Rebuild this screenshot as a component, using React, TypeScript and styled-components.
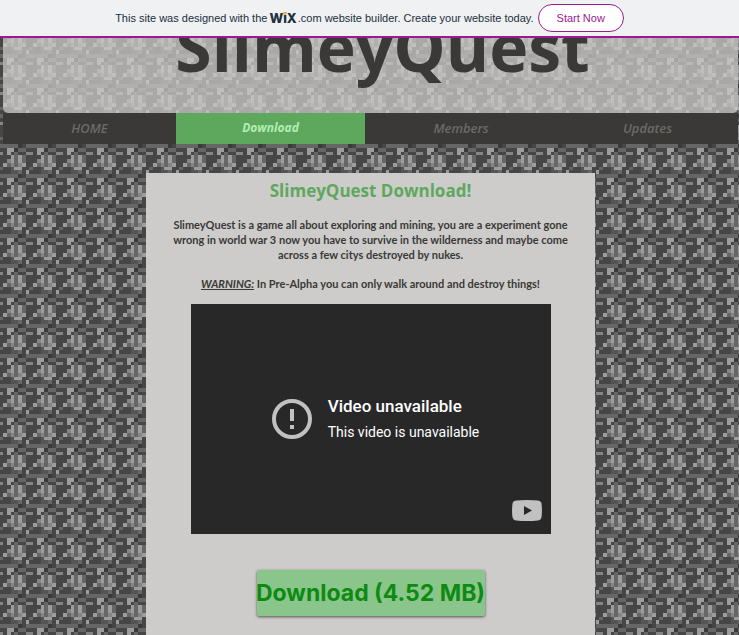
import React from "react";
import styled, { createGlobalStyle } from "styled-components";

/* Shades of the stone texture, one digit per texel, eight texels per row. */
const shades = ["#3a3a3a", "#464646", "#555555", "#666666", "#858585", "#9d9d9d"];
const texels = [
  "33330133",
  "15503311",
  "15131144",
  "11535311",
  "14535311",
  "53434511",
  "11255113",
  "11223151",
];

const stoneTile = (() => {
  const rects = texels
    .map((row, y) =>
      row
        .split("")
        .map((s, x) => `<rect x='${x}' y='${y}' width='1' height='1' fill='${shades[Number(s)]}'/>`)
        .join("")
    )
    .join("");
  const svg = `<svg xmlns='http://www.w3.org/2000/svg' width='30' height='30' viewBox='0 0 8 8' shape-rendering='crispEdges'>${rects}</svg>`;
  return `url("data:image/svg+xml,${encodeURIComponent(svg).replace(/'/g, "%27")}")`;
})();

const GlobalStyle = createGlobalStyle`
  * { box-sizing: border-box; }
  body {
    margin: 0;
    background: ${stoneTile} 3px 24px / 30px 30px #555;
    font-family: "Liberation Sans", Arial, sans-serif;
    color: #3a3937;
  }
`;

const Banner = styled.aside`
  display: flex;
  align-items: center;
  justify-content: center;
  gap: 4px;
  height: 38px;
  background: #eff1f3;
  border-bottom: 2px solid #9a1b8f;
  color: #20303c;
  font-size: 11px;
  white-space: nowrap;
`;

const BannerText = styled.p`
  margin: 0;
  display: flex;
  align-items: center;
  line-height: 16px;
`;

const WixMark = styled.span`
  position: relative;
  margin: 0 1px 0 2px;
  font: 800 13px/16px Inter, sans-serif;

  &::after {
    content: "";
    position: absolute;
    left: 14px;
    top: 2px;
    width: 3px;
    height: 3px;
    border-radius: 1px;
    background: #fbbd23;
  }
`;

const StartLink = styled.a`
  display: flex;
  align-items: center;
  height: 28px;
  padding: 0 18px;
  border: 1px solid #9a1b8f;
  border-radius: 14px;
  background: #fff;
  color: #9a1b8f;
  font-size: 11px;
  text-decoration: none;
`;

const Site = styled.div`
  margin: 0 1px 0 3px;
`;

const Header = styled.header`
  display: flex;
  align-items: flex-start;
  justify-content: center;
  height: 75px;
  overflow: hidden;
  border-radius: 0 0 5px 5px;
  background: rgba(205, 204, 202, 0.73);
`;

const SiteTitle = styled.h1`
  margin: -25px 0 0 24px;
  font: 700 66px/66px "Open Sans", sans-serif;
`;

const Nav = styled.nav`
  display: grid;
  grid-template-columns: 173fr 189fr 192fr 181fr;
  height: 31px;
  background: #3a3937;
`;

const NavLink = styled.a<{ $active?: boolean }>`
  display: flex;
  align-items: center;
  justify-content: center;
  padding-bottom: 2px;
  background: ${(p) => (p.$active ? "#5ea85e" : "transparent")};
  color: ${(p) => (p.$active ? "#b4ecb4" : "#6b6a68")};
  font: italic ${(p) => (p.$active ? "700 12px" : "600 13px")}/20px "Open Sans", sans-serif;
  text-decoration: none;
`;

const Panel = styled.main`
  display: flex;
  flex-direction: column;
  align-items: center;
  width: 100%;
  max-width: 449px;
  min-height: 462px;
  margin: 29px auto 0;
  padding: 4px 20px 20px;
  background: #cdccca;
  text-align: center;
`;

const PanelTitle = styled.h2`
  margin: 0;
  color: #5ea85e;
  font: 700 17px/28px "Open Sans", sans-serif;
`;

const Copy = styled.p`
  margin: 12px 0 0;
  font: 700 11px/15px Lato, sans-serif;

  & + & {
    margin-top: 14px;
  }
`;

const Warning = styled.em`
  text-decoration: underline;
`;

const Player = styled.section`
  position: relative;
  display: flex;
  align-items: center;
  justify-content: center;
  gap: 16px;
  width: 360px;
  max-width: 100%;
  height: 230px;
  margin-top: 13px;
  padding-left: 10px;
  background: #282828;
  color: #fff;
  font-family: Roboto, sans-serif;
  text-align: left;
`;

const PlayerHeading = styled.h3`
  margin: 0;
  font-size: 17px;
  font-weight: 500;
  line-height: 26px;
`;

const PlayerNote = styled.p`
  margin: 0;
  font-size: 14px;
  line-height: 26px;
`;

const PlayButton = styled.button`
  position: absolute;
  right: 9px;
  bottom: 13px;
  display: flex;
  padding: 0;
  border: 0;
  background: none;
`;

const DownloadLink = styled.a`
  display: flex;
  align-items: center;
  justify-content: center;
  width: 228px;
  height: 46px;
  margin-top: 36px;
  border-radius: 2px;
  background: #8ac68b;
  box-shadow: 0 1px 3px rgba(0, 0, 0, 0.6);
  color: #0e8a12;
  font: 700 23px/32px Inter, sans-serif;
  text-decoration: none;
  white-space: nowrap;
`;

const links = ["HOME", "Download", "Members", "Updates"];

export default function App() {
  return (
    <>
      <GlobalStyle />
      <Banner>
        <BannerText>
          <span>This site was designed with the</span>
          <WixMark>WiX</WixMark>
          <span>.com website builder. Create your website today.</span>
        </BannerText>
        <StartLink href="#start">Start Now</StartLink>
      </Banner>
      <Site>
        <Header>
          <SiteTitle>SlimeyQuest</SiteTitle>
        </Header>
        <Nav>
          {links.map((label) => (
            <NavLink key={label} href={`#${label.toLowerCase()}`} $active={label === "Download"}>
              {label}
            </NavLink>
          ))}
        </Nav>
        <Panel>
          <PanelTitle>SlimeyQuest Download!</PanelTitle>
          <Copy>
            SlimeyQuest is a game all about exploring and mining, you are a experiment gone
            <br />
            wrong in world war 3 now you have to survive in the wilderness and maybe come
            <br />
            across a few citys destroyed by nukes.
          </Copy>
          <Copy>
            <Warning>WARNING:</Warning> In Pre-Alpha you can only walk around and destroy things!
          </Copy>
          <Player>
            <svg width="40" height="40" viewBox="0 0 40 40" aria-hidden="true">
              <circle cx="20" cy="20" r="18" fill="none" stroke="#c1c1c1" strokeWidth="4" />
              <path d="M18 10h4v12h-4zM18 26h4v4h-4z" fill="#c1c1c1" />
            </svg>
            <div>
              <PlayerHeading>Video unavailable</PlayerHeading>
              <PlayerNote>This video is unavailable</PlayerNote>
            </div>
            <PlayButton type="button" aria-label="Watch on YouTube">
              <svg width="30" height="21" viewBox="0 0 30 21" aria-hidden="true">
                <path
                  d="M4 .6Q15-.5 26 .6 29.4 1 29.6 4.500 30.300 10.500 29.600 16.500 29.400 20 26 20.400 15 21.500 4 20.400.6 20 .4 16.500-.3 10.500.4 4.500.6 1 4 .6z"
                  fill="#c1c1c1"
                />
                <path d="M12 6v9l8-4.500z" fill="#282828" />
              </svg>
            </PlayButton>
          </Player>
          <DownloadLink href="#file">Download (4.52 MB)</DownloadLink>
        </Panel>
      </Site>
    </>
  );
}
